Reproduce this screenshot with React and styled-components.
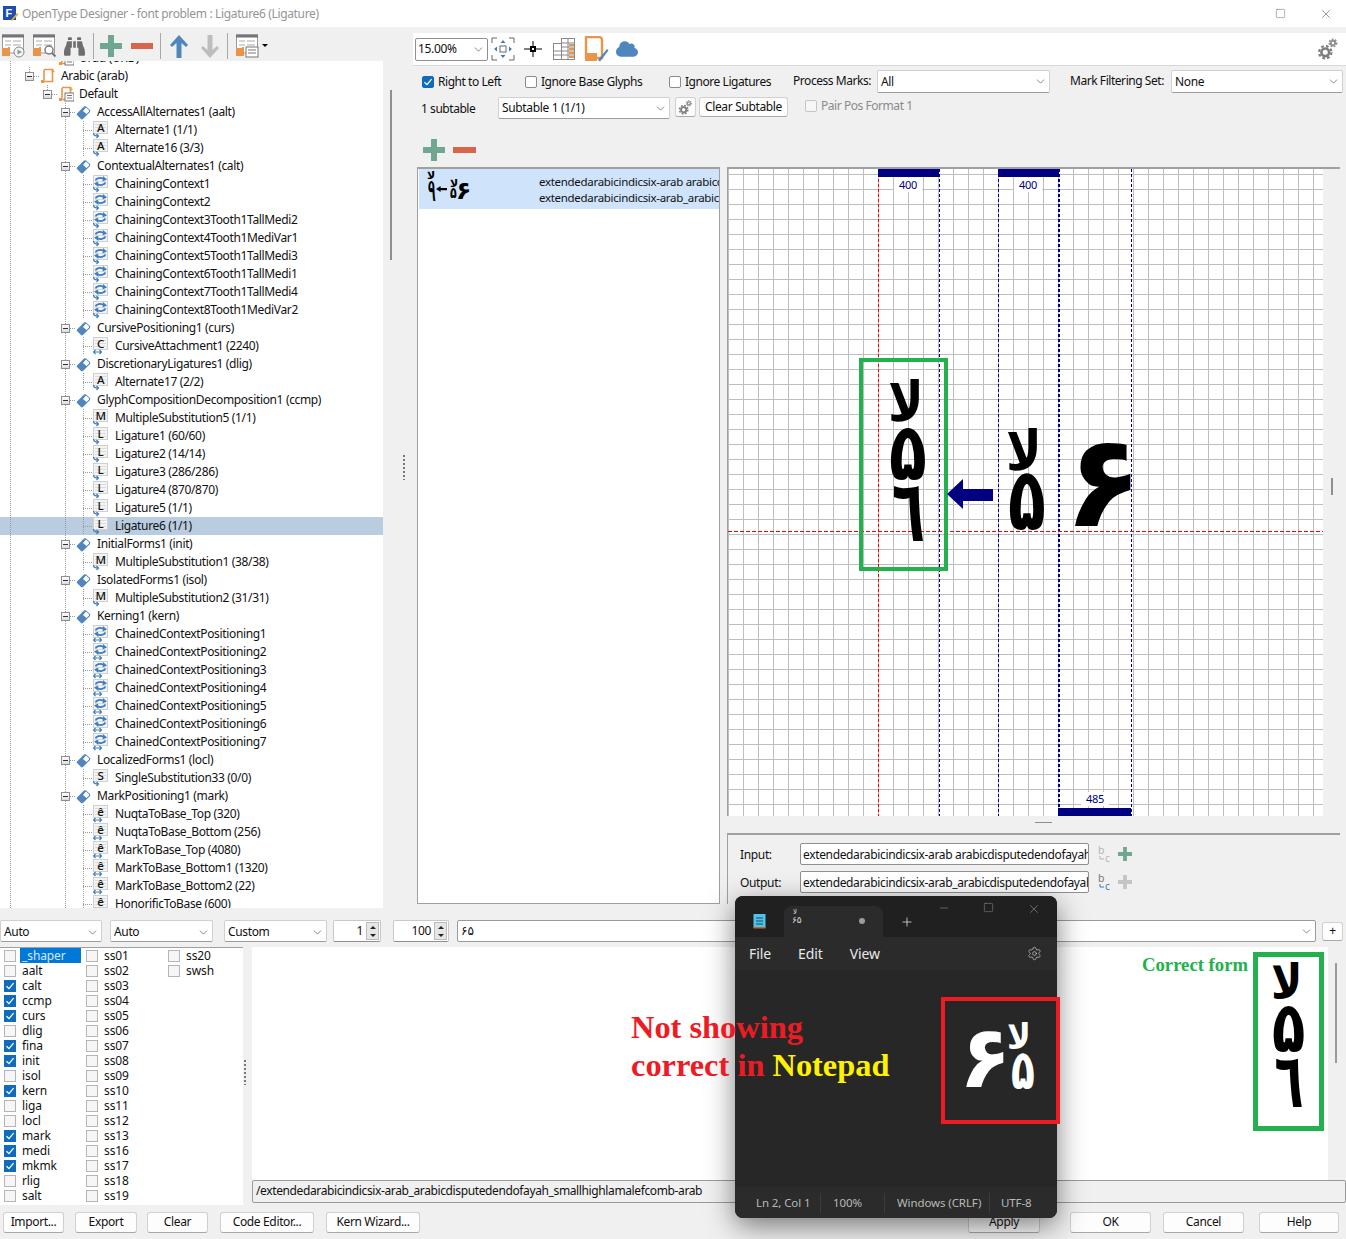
import React from "react";
import styled, { createGlobalStyle } from "styled-components";
import { FaBinoculars, FaCloud } from "react-icons/fa";
import { Settings, Plus, Minus, Square, X, ChevronDown } from "lucide-react";

const UI = `"Noto Sans", "Open Sans", sans-serif`;
const ARABIC = `"DejaVu Sans", sans-serif`;
const SERIF = `"Liberation Serif", serif`;

const Global = createGlobalStyle`
  html, body { margin: 0; background: #f0f0f0; }
  body { font: 12px/16px ${UI}; letter-spacing: -0.35px; color: #111; }
  * { box-sizing: border-box; }
`;

const Page = styled.div`
  position: relative;
  width: 1346px;
  height: 1239px;
  overflow: hidden;
  background: #f0f0f0;
`;

const Gap = styled.span`
  width: ${(p) => p.$w}px;
  flex: none;
`;

const TitleBar = styled.div`
  height: 27px;
  background: #fff;
  display: flex;
  align-items: center;
  color: #959595;
  font-size: 12px;
  padding-left: 2px;
  gap: 3px;
`;
const WinControls = styled.div`
  margin-left: auto;
  display: flex;
  align-items: center;
  gap: 33px;
  padding-right: 13px;
  color: #555;
`;

const Upper = styled.div`
  display: flex;
  height: 881px;
`;
const LeftPane = styled.div`
  width: 395px;
  display: flex;
  flex-direction: column;
`;
const LeftToolbar = styled.div`
  height: 34px;
  padding: 4px 0 0 1px;
  display: flex;
  align-items: center;
`;
const ToolSep = styled.span`
  width: 1px;
  height: 26px;
  background: #a8a8a8;
  margin: 0 ${(p) => p.$right ?? 6}px 0 ${(p) => p.$left ?? 7}px;
`;
const TreeArea = styled.div`
  flex: 1;
  display: flex;
  min-height: 0;
`;
const Tree = styled.div`
  width: 383px;
  background: #fff;
  overflow: hidden;
`;
const TreeInner = styled.div`
  margin-top: -12px;
`;
const TreeThumb = styled.div`
  width: 2px;
  height: 170px;
  background: #8f8f8f;
  margin: 29px 0 0 7px;
`;

const dotted = (x) => `linear-gradient(#9a9a9a 50%, transparent 50%) ${x}px 0 / 1px 2px repeat-y`;

const TreeRow = styled.div`
  height: 18px;
  position: relative;
  display: flex;
  align-items: center;
  white-space: nowrap;
  padding-left: ${(p) => p.$pad}px;
  background: ${(p) => (p.$selected ? "#b9cce0" : "transparent")};
  &::before {
    content: "";
    position: absolute;
    inset: 0;
    background: ${(p) => p.$guides.map((x) => dotted(x)).join(", ")};
    pointer-events: none;
  }
  &::after {
    content: "";
    position: absolute;
    left: ${(p) => p.$stub ?? 0}px;
    top: 0;
    width: 1px;
    height: 9px;
    display: ${(p) => (p.$stub ? "block" : "none")};
    background: linear-gradient(#9a9a9a 50%, transparent 50%) 0 0 / 1px 2px;
  }
`;
const Expander = styled.span`
  position: relative;
  z-index: 1;
  width: 9px;
  height: 9px;
  border: 1px solid #8f8f8f;
  background: linear-gradient(#fff, #dcdcdc);
  flex: none;
  &::after {
    content: "";
    position: absolute;
    left: 1px;
    top: 3px;
    width: 5px;
    height: 1px;
    background: #333;
  }
`;
const Dots = styled.span`
  width: ${(p) => p.$w}px;
  height: 1px;
  flex: none;
  background: linear-gradient(to right, #9a9a9a 50%, transparent 50%) 0 0 / 2px 1px;
`;
const RowLabel = styled.span`
  margin-left: ${(p) => p.$ml ?? 7}px;
  position: relative;
  z-index: 1;
`;

const Splitter = styled.div`
  width: 18px;
  display: flex;
  align-items: center;
  justify-content: center;
`;
const Grip = styled.span`
  display: block;
  width: 2px;
  height: 25px;
  background: linear-gradient(#777 50%, transparent 50%) 0 0 / 2px 4px;
`;

const RightPane = styled.div`
  flex: 1;
  display: flex;
  flex-direction: column;
  padding-top: 6px;
  min-width: 0;
`;
const TopBar = styled.div`
  height: 33px;
  background: #fff;
  border-bottom: 1px solid #d8d8d8;
  display: flex;
  align-items: center;
  padding: 0 7px 0 2px;
`;
const TopGear = styled.span`
  margin-left: auto;
  display: flex;
`;
const OptRow = styled.div`
  display: flex;
  align-items: center;
  height: ${(p) => p.$h}px;
  margin-top: 4px;
  padding-left: ${(p) => p.$pad}px;
`;
const Check = styled.span`
  display: flex;
  align-items: center;
  gap: 4px;
  width: ${(p) => p.$w}px;
  margin: ${(p) => p.$mt ?? 0}px 0 0 ${(p) => p.$ml ?? 0}px;
  flex: none;
  letter-spacing: -0.45px;
  color: ${(p) => (p.$off ? "#8b8b8b" : "#111")};
`;
const Box = styled.span`
  width: 12px;
  height: 12px;
  flex: none;
  border-radius: ${(p) => (p.$round ? 2 : 0)}px;
  border: 1px solid ${(p) => (p.$on ? "#0f6cbd" : p.$off ? "#c4c4c4" : p.$soft ? "#b5b5b5" : "#8a8a8a")};
  background: ${(p) => (p.$on ? "#0f6cbd" : p.$grey ? "#f6f6f6" : "#fff")};
  display: flex;
  align-items: center;
  justify-content: center;
`;
const Label = styled.span`
  width: ${(p) => p.$w}px;
  margin: ${(p) => p.$mt ?? 0}px 0 0 ${(p) => p.$ml ?? 0}px;
  flex: none;
  white-space: nowrap;
  letter-spacing: -0.45px;
`;
const SelectBox = styled.div`
  width: ${(p) => p.$w}px;
  height: ${(p) => p.$h ?? 23}px;
  margin-left: ${(p) => p.$ml ?? 0}px;
  flex: none;
  display: flex;
  align-items: center;
  justify-content: space-between;
  padding: ${(p) => p.$pt ?? 0}px 2px 0 ${(p) => p.$pl ?? 3}px;
  background: #fff;
  border: 1px solid ${(p) => p.$line ?? "#d0d0d0"};
  border-bottom-color: ${(p) => p.$line ?? "#9c9c9c"};
  border-radius: 2px;
`;
const SampleText = styled.span`
  font-family: ${ARABIC};
  font-size: 12px;
  letter-spacing: 0;
`;
const FlatBtn = styled.button`
  font: inherit;
  letter-spacing: inherit;
  color: #111;
  width: ${(p) => p.$w}px;
  height: ${(p) => p.$h ?? 21}px;
  margin: ${(p) => p.$mt ?? 0}px 0 0 ${(p) => p.$ml ?? 0}px;
  flex: none;
  padding: 0;
  display: inline-flex;
  align-items: center;
  justify-content: center;
  background: #fdfdfd;
  border: 1px solid #d0d0d0;
  border-bottom-color: #a8a8a8;
  border-radius: 3px;
`;
const AddRow = styled.div`
  height: 22px;
  margin-top: 20px;
  padding-left: 10px;
  display: flex;
  align-items: center;
  gap: 8px;
`;
const Work = styled.div`
  margin-top: 6px;
  height: 737px;
  padding-left: 4px;
  display: flex;
  gap: 7px;
`;
const ListPane = styled.div`
  width: 303px;
  background: #fff;
  border: 1px solid #a0a0a0;
  border-top-width: 2px;
  padding: 0 0 0 1px;
`;
const ListItem = styled.div`
  height: 40px;
  background: #cfe3fb;
  display: flex;
  overflow: hidden;
  position: relative;
`;
const ListText = styled.div`
  margin-left: 120px;
  padding-top: 5px;
  font-size: 11.5px;
  line-height: 16px;
  white-space: nowrap;
  overflow: hidden;
  letter-spacing: -0.3px;
`;
const MiniArrow = styled.svg`
  position: absolute;
  left: 17px;
  top: 17px;
`;
const RightCol = styled.div`
  width: 613px;
  display: flex;
  flex-direction: column;
`;
const CanvasFrame = styled.div`
  height: 649px;
  display: flex;
  border-top: 2px solid #a0a0a0;
  border-left: 1px solid #a0a0a0;
`;
const Grid = styled.div`
  position: relative;
  width: 595px;
  overflow: hidden;
  background-color: #fff;
  background-image: linear-gradient(to right, #bdbdbd 1px, transparent 1px),
    linear-gradient(#bdbdbd 1px, transparent 1px);
  background-size: 15px 15px;
  background-position: 0 5px;
  &::after {
    content: "";
    position: absolute;
    top: 0;
    bottom: 0;
    right: 0;
    width: 9px;
    background: linear-gradient(#bdbdbd 1px, transparent 1px) 0 5px / 15px 15px, #fff;
  }
`;
const Gutter = styled.div`
  flex: 1;
  display: flex;
  justify-content: center;
  padding-top: 309px;
`;
const GutterThumb = styled.span`
  width: 2px;
  height: 17px;
  background: #8f8f8f;
`;
const VGuide = styled.span`
  position: absolute;
  top: 0;
  bottom: 0;
  left: ${(p) => p.$x}px;
  z-index: 1;
  width: ${(p) => p.$w ?? 1}px;
  background: repeating-linear-gradient(${(p) => p.$c} 0 3px, transparent 3px 5px);
`;
const Baseline = styled.span`
  position: absolute;
  left: 0;
  right: 0;
  top: 362px;
  height: 1px;
  z-index: 1;
  background: repeating-linear-gradient(to right, #f00 0 4px, transparent 4px 6px);
`;
const WidthBar = styled.span`
  position: absolute;
  z-index: 2;
  left: ${(p) => p.$x}px;
  width: ${(p) => p.$w}px;
  ${(p) => (p.$bottom ? "top: 639px;" : "top: 0;")}
  height: 8px;
  background: #000080;
`;
const WidthLabel = styled.span`
  position: absolute;
  z-index: 2;
  left: ${(p) => p.$x}px;
  top: ${(p) => p.$y}px;
  width: 28px;
  text-align: center;
  font-size: 11px;
  line-height: 14px;
  color: #000080;
  background: #fff;
`;
const GreenFrame = styled.span`
  position: absolute;
  z-index: 3;
  left: ${(p) => p.$x}px;
  top: ${(p) => p.$y}px;
  width: ${(p) => p.$w}px;
  height: ${(p) => p.$h}px;
  border: ${(p) => p.$b}px solid #22b14c;
`;
const ArrowMark = styled.svg`
  position: absolute;
  z-index: 3;
  left: 219px;
  top: 310px;
`;
const Glyph = styled.span`
  position: absolute;
  z-index: ${(p) => p.$z ?? 3};
  left: ${(p) => p.$x}px;
  top: ${(p) => p.$y}px;
  font-family: ${ARABIC};
  font-weight: ${(p) => p.$weight ?? 700};
  font-size: ${(p) => p.$s}px;
  line-height: 1;
  letter-spacing: 0;
  color: ${(p) => p.$c ?? "#000"};
  white-space: nowrap;
  transform-origin: 0 0;
  transform: scaleY(${(p) => p.$sy ?? 1});
`;
const DashRow = styled.div`
  height: 17px;
  display: flex;
  justify-content: flex-end;
  padding: 6px 288px 0 0;
`;
const Dash = styled.span`
  width: 17px;
  height: 1px;
  background: #8f8f8f;
`;
const IOPanel = styled.div`
  flex: 1;
  border-top: 2px solid #a0a0a0;
  border-left: 1px solid #a0a0a0;
  padding: 8px 0 0 12px;
  display: flex;
  flex-direction: column;
  gap: 6px;
`;
const IORow = styled.div`
  display: flex;
  align-items: center;
  height: 22px;
`;
const IOLabel = styled.span`
  width: 60px;
  padding-top: 2px;
`;
const TextField = styled.div`
  width: ${(p) => p.$w}px;
  height: 22px;
  flex: none;
  background: #fff;
  border: 1px solid #8f8f8f;
  border-radius: 2px;
  padding: 3px 0 0 2px;
  white-space: nowrap;
  overflow: hidden;
`;
const IOIcon = styled.span`
  display: flex;
  margin-left: ${(p) => p.$ml}px;
`;

const ControlRow = styled.div`
  margin-top: 12px;
  height: 22px;
  display: flex;
  align-items: center;
`;
const Spin = styled.div`
  width: ${(p) => p.$w}px;
  height: 22px;
  margin-left: ${(p) => p.$ml}px;
  flex: none;
  background: #fff;
  border: 1px solid #c8c8c8;
  border-bottom-color: #8f8f8f;
  border-radius: 2px;
  display: flex;
  align-items: center;
  justify-content: flex-end;
  gap: 3px;
`;
const SpinBtns = styled.span`
  width: 13px;
  height: 18px;
  display: flex;
  flex-direction: column;
  background: #e6e6e6;
  border: 1px solid #bbb;
  margin-right: 1px;
`;
const SpinArrow = styled.span`
  flex: 1;
  display: flex;
  align-items: center;
  justify-content: center;
  &::after {
    content: "";
    border-left: 3px solid transparent;
    border-right: 3px solid transparent;
    ${(p) => (p.$down ? "border-top: 3px solid #222;" : "border-bottom: 3px solid #222;")}
  }
`;
const Lower = styled.div`
  margin-top: 5px;
  height: 258px;
  display: flex;
`;
const Checks = styled.div`
  width: 243px;
  background: #fff;
  border-top: 1px solid #a0a0a0;
  padding: 0 0 0 4px;
  display: grid;
  grid-template-rows: repeat(17, 15px);
  grid-template-columns: 82px 82px 70px;
  grid-auto-flow: column;
`;
const Feature = styled.div`
  display: flex;
  align-items: center;
  font-size: 12px;
  letter-spacing: -0.1px;
`;
const FeatureName = styled.span`
  margin-left: ${(p) => (p.$sel ? 4 : 6)}px;
  padding-left: ${(p) => (p.$sel ? 2 : 0)}px;
  width: ${(p) => (p.$sel ? "61px" : "auto")};
  height: 15px;
  line-height: 15px;
  color: ${(p) => (p.$sel ? "#d5e8fa" : "#111")};
  background: ${(p) => (p.$sel ? "#0078d7" : "transparent")};
`;
const LowerGrip = styled.div`
  width: 9px;
  display: flex;
  padding: 113px 0 0 1px;
`;
const PreviewCol = styled.div`
  flex: 1;
  display: flex;
  flex-direction: column;
`;
const PreviewRow = styled.div`
  height: 233px;
  display: flex;
`;
const Preview = styled.div`
  width: 1076px;
  background: #fff;
`;
const PreviewThumb = styled.span`
  width: 2px;
  height: 100px;
  margin: 16px 0 0 7px;
  background: #9a9a9a;
`;
const PathField = styled.div`
  height: 23px;
  border: 1px solid #9a9a9a;
  border-radius: 2px;
  padding: 2px 0 0 3px;
  white-space: nowrap;
  overflow: hidden;
  letter-spacing: -0.38px;
`;
const Footer = styled.div`
  margin-top: 6px;
  height: 22px;
  display: flex;
  align-items: center;
`;

const Notepad = styled.div`
  position: absolute;
  z-index: 10;
  left: 735px;
  top: 896px;
  width: 322px;
  height: 322px;
  background: #272727;
  border-radius: 8px;
  box-shadow: 0 8px 28px rgba(0, 0, 0, 0.5);
  display: flex;
  flex-direction: column;
  color: #e8e8e8;
  overflow: hidden;
`;
const NpHead = styled.div`
  height: 41px;
  background: #202020;
  display: flex;
  align-items: flex-end;
  padding-left: 18px;
  position: relative;
`;
const NpTab = styled.div`
  width: 99px;
  height: 31px;
  margin-left: 18px;
  background: #2b2b2b;
  border-radius: 8px 8px 0 0;
  position: relative;
`;
const NpDot = styled.span`
  position: absolute;
  right: 18px;
  top: 12px;
  width: 6px;
  height: 6px;
  border-radius: 50%;
  background: #9c9c9c;
`;
const NpIcon = styled.svg`
  margin-bottom: 8px;
`;
const NpPlus = styled.span`
  display: flex;
  margin: 0 0 8px 17px;
  color: #e8e8e8;
`;
const NpWin = styled.div`
  position: absolute;
  right: 16px;
  top: 6px;
  display: flex;
  gap: 33px;
  color: #a0a0a0;
`;
const NpMenu = styled.div`
  height: 33px;
  background: #2b2b2b;
  display: flex;
  align-items: center;
  padding: 0 15px 0 14px;
  gap: 27px;
  font-size: 14px;
  letter-spacing: -0.1px;
`;
const NpBody = styled.div`
  flex: 1;
`;
const NpStatus = styled.div`
  height: 31px;
  background: #2b2b2b;
  display: flex;
  align-items: center;
  padding-left: 21px;
  color: #b9b9b9;
  font-size: 11.5px;
  letter-spacing: -0.1px;
`;
const NpCell = styled.span`
  width: ${(p) => p.$w}px;
  padding-left: ${(p) => p.$pl ?? 12}px;
  height: 20px;
  line-height: 20px;
  flex: none;
  white-space: nowrap;
  border-right: 1px solid ${(p) => (p.$end ? "transparent" : "#3c3c3c")};
`;
const NpEnd = styled.span`
  margin-left: auto;
  display: flex;
`;
const NoteBlock = styled.div`
  position: absolute;
  z-index: 12;
  left: 631px;
  top: 1008px;
  font: bold 32.4px/38px ${SERIF};
  letter-spacing: 0;
  color: #ed1c24;
  white-space: nowrap;
`;
const Yellow = styled.span`
  color: #fff200;
`;
const CorrectNote = styled.div`
  position: absolute;
  z-index: 12;
  left: 1142px;
  top: 953px;
  font: bold 18.7px/24px ${SERIF};
  letter-spacing: 0;
  color: #22b14c;
`;
const RedFrame = styled.span`
  position: absolute;
  z-index: 12;
  left: 941px;
  top: 997px;
  width: 119px;
  height: 127px;
  border: 4px solid #ed1c24;
`;
const ArrowSvg = styled.svg`
  transform: ${(p) => (p.$down ? "rotate(180deg)" : "none")};
`;
const Caret = styled.svg`
  margin-left: 3px;
`;

/* ---- icons ---- */
const AppLogo = () => (
  <svg width="17" height="17" viewBox="0 0 17 17">
    <rect x="1" y="1" width="13" height="14" fill="#1c4fb0" />
    <text x="3.5" y="12" fontSize="11" fontWeight="700" fill="#fff" fontFamily="Liberation Sans">F</text>
    <path d="M9 15 15 8l1.500 1.500L10 16z" fill="#e8b020" />
  </svg>
);

const WindowDoc = ({ children }) => (
  <svg width="24" height="24" viewBox="0 0 24 24">
    <rect x="1.500" y="1" width="21" height="18" fill="#fff" stroke="#999" />
    <rect x="1" y="0.500" width="22" height="3" fill="#757575" />
    <path d="M4 7h6M12 7h8M4 11h6M12 11h8" stroke="#aaa" />
    <path d="M1 14h6v-1h2v9H1z" fill="#e8954a" />
    {children}
  </svg>
);

const PlusMark = ({ c = "#6fa790", size = 22 }) => (
  <svg width={size} height={size} viewBox="0 0 22 22">
    <path d="M8 0h6v8h8v6h-8v8H8v-8H0V8h8z" fill={c} />
  </svg>
);
const MinusMark = ({ w = 22, h = 6 }) => (
  <svg width={w} height={h}>
    <rect width={w} height={h} fill="#d8654a" />
  </svg>
);
const BigArrow = ({ c, down }) => (
  <ArrowSvg $down={down} width="18" height="23" viewBox="0 0 18 23">
    <path d="M9 0 18 10 16 12 11.500 8V23H6.500V8L2 12 0 10z" fill={c} />
  </ArrowSvg>
);
const Gears = ({ size = 20 }) => (
  <svg width={size} height={size} viewBox="0 0 20 20">
    <circle cx="7.500" cy="13" r="3.500" fill="none" stroke="#7d7d7d" strokeWidth="2.400" />
    <circle cx="7.500" cy="13" r="5.600" fill="none" stroke="#7d7d7d" strokeWidth="2" strokeDasharray="2.400 2" />
    <circle cx="14.500" cy="4.500" r="2" fill="none" stroke="#8f8f8f" strokeWidth="1.800" />
    <circle cx="14.500" cy="4.500" r="3.400" fill="none" stroke="#8f8f8f" strokeWidth="1.400" strokeDasharray="1.600 1.300" />
  </svg>
);
const Tick = () => (
  <svg width="10" height="10" viewBox="0 0 10 10">
    <path d="M1.500 5.200 4 7.600 8.600 2.200" fill="none" stroke="#fff" strokeWidth="1.300" />
  </svg>
);
const Chevron = () => <ChevronDown size={13} color="#555" strokeWidth={1.3} />;

const ScriptIcon = ({ lang }) => (
  <svg width="16" height="16" viewBox="0 0 16 16">
    <path d="M4 1.500h8.500v12H3" fill="#fff" stroke="#e8954a" strokeWidth="1.600" />
    <path d="M4 2v10.500" stroke="#e8954a" strokeWidth="1.600" />
    <path d="M1 12h3v3H1z" fill="#e8954a" />
    <path d="M12.500 1v2.500h2" fill="none" stroke="#e8954a" strokeWidth="1.500" />
    {lang && (
      <>
        <rect x="7" y="7" width="9" height="8" fill="#fff" stroke="#777" />
        <path d="M9 9.500h5M9 12h5" stroke="#777" />
      </>
    )}
  </svg>
);
const FeatureIcon = () => (
  <svg width="15" height="15" viewBox="0 0 15 15">
    <path d="M1 8.500 8 1.500Q9 .8 10 1.500L14 5Q14.600 6 14 7L7 14Q6 14.600 5 14L1 10Q.4 9.200 1 8.500z" fill="#4f86bd" />
    <path d="M7 6 9.500 3Q10 2.500 10.500 3L13 5.300Q13.300 6 13 6.500L10.500 9z" fill="#fff" />
  </svg>
);
const LookupIcon = ({ kind }) => {
  const pos = kind === "ê" || kind === "chainedPos" || kind === "C";
  const chain = kind === "chain" || kind === "chainedPos";
  return (
    <svg width="15" height="18" viewBox="0 0 15 18">
      <rect x="0.500" y="0.500" width="14" height="12" fill="#f4f4f4" stroke="#cfcfcf" />
      <path d="M2 3.500h11M2 6.500h11M2 9.500h11" stroke="#dcdcdc" />
      {chain ? (
        <>
          <path d="M2.500 5.500C3.500 3 7 2.200 10.500 3.800" fill="none" stroke="#3f7fc0" strokeWidth="1.800" />
          <path d="M10 1 14 4.500 9.500 6.500z" fill="#3f7fc0" />
          <path d="M12.500 7.500C11 10 7.500 10.800 4.500 9.200" fill="none" stroke="#3f7fc0" strokeWidth="1.800" />
          <path d="M5 6.500 1 8.500 5.500 12z" fill="#3f7fc0" />
        </>
      ) : (
        <text x="7.500" y="10.500" textAnchor="middle" fontSize="11.500" fontWeight="500" fontFamily="Noto Sans" fill="#111">{kind}</text>
      )}
      {pos ? (
        <path d="M0.500 15h8M2.500 13l-2 2 2 2M6.500 13l2 2-2 2" fill="none" stroke="#3f7fc0" strokeWidth="1.200" />
      ) : (
        <path d="M0.500 12c0 2 1.500 3 4.500 3M3.500 13l2 2-2 2" fill="none" stroke="#3f7fc0" strokeWidth="1.200" />
      )}
    </svg>
  );
};
const SplitIcon = ({ off }) => (
  <svg width="13" height="17" viewBox="0 0 13 17">
    <text x="0" y="8" fontSize="10.500" fontFamily="Noto Sans" fill={off ? "#b5b5b5" : "#777"}>b</text>
    <path d="M2 10v3h4" fill="none" stroke={off ? "#b5b5b5" : "#3a78bc"} />
    <text x="7" y="15.500" fontSize="10" fontFamily="Noto Sans" fill={off ? "#b5b5b5" : "#3a78bc"}>c</text>
  </svg>
);

const FitIcon = () => (
  <svg width="24" height="24" viewBox="0 0 24 24">
    <path d="M1 6V1h5M18 1h5v5M23 18v5h-5M6 23H1v-5" fill="none" stroke="#666" />
    <rect x="9" y="9" width="6" height="6" fill="none" stroke="#666" />
    <path d="M12 3l2.500 3h-5zM12 21l2.500-3h-5zM3 12l3-2.500v5zM21 12l-3-2.500v5z" fill="#3f7fc0" />
  </svg>
);
const CrossIcon = () => (
  <svg width="18" height="18" viewBox="0 0 18 18">
    <path d="M0 9h18M9 1v16" stroke="#000" />
    <rect x="6" y="6" width="6" height="6" fill="#000" />
    <rect x="8" y="8" width="2" height="2" fill="#fff" />
  </svg>
);
const TableIcon = () => (
  <svg width="22" height="22" viewBox="0 0 22 22">
    <rect x="8.500" y="0.500" width="13" height="21" fill="#fff" stroke="#888" />
    <rect x="0.500" y="5.500" width="8" height="16" fill="#fff" stroke="#888" />
    <path d="M8 5h14M8 9h14M1 13h21M1 17h21M15 1v20" stroke="#888" />
    <path d="M16 6h5v2h-5zM16 10h5v2h-5zM16 14h5v2h-5zM16 18h5v2h-5z" fill="#e8954a" />
  </svg>
);
const OrangeDoc = () => (
  <svg width="25" height="26" viewBox="0 0 25 26">
    <path d="M2 1h13a3 3 0 0 1 3 3v18H2z" fill="#fff" stroke="#e8954a" strokeWidth="2.400" />
    <path d="M1 17h12v8H1z" fill="#e8954a" />
    <path d="M14 24 23 13l1.500 1.500L16 25.500z" fill="#4f86bd" />
  </svg>
);

/* ---- data ---- */
const group = (name, kind, items) => [
  { type: "feature", label: name },
  ...items.map((label) => ({ type: "lookup", label, kind })),
];
const range = (prefix, n) => Array.from({ length: n }, (_, i) => `${prefix}${i + 1}`);

const treeRows = [
  { type: "lang", label: "Urdu (URD)" },
  { type: "script", label: "Arabic (arab)" },
  { type: "lang", label: "Default", stub: true },
  ...group("AccessAllAlternates1 (aalt)", "A", ["Alternate1 (1/1)", "Alternate16 (3/3)"]),
  ...group("ContextualAlternates1 (calt)", "chain", [
    "ChainingContext1",
    "ChainingContext2",
    "ChainingContext3Tooth1TallMedi2",
    "ChainingContext4Tooth1MediVar1",
    "ChainingContext5Tooth1TallMedi3",
    "ChainingContext6Tooth1TallMedi1",
    "ChainingContext7Tooth1TallMedi4",
    "ChainingContext8Tooth1MediVar2",
  ]),
  ...group("CursivePositioning1 (curs)", "C", ["CursiveAttachment1 (2240)"]),
  ...group("DiscretionaryLigatures1 (dlig)", "A", ["Alternate17 (2/2)"]),
  { type: "feature", label: "GlyphCompositionDecomposition1 (ccmp)" },
  { type: "lookup", kind: "M", label: "MultipleSubstitution5 (1/1)" },
  { type: "lookup", kind: "L", label: "Ligature1 (60/60)" },
  { type: "lookup", kind: "L", label: "Ligature2 (14/14)" },
  { type: "lookup", kind: "L", label: "Ligature3 (286/286)" },
  { type: "lookup", kind: "L", label: "Ligature4 (870/870)" },
  { type: "lookup", kind: "L", label: "Ligature5 (1/1)" },
  { type: "lookup", kind: "L", label: "Ligature6 (1/1)", selected: true },
  ...group("InitialForms1 (init)", "M", ["MultipleSubstitution1 (38/38)"]),
  ...group("IsolatedForms1 (isol)", "M", ["MultipleSubstitution2 (31/31)"]),
  ...group("Kerning1 (kern)", "chainedPos", range("ChainedContextPositioning", 7)),
  ...group("LocalizedForms1 (locl)", "S", ["SingleSubstitution33 (0/0)"]),
  { type: "feature", label: "MarkPositioning1 (mark)" },
  ...[
    "NuqtaToBase_Top (320)",
    "NuqtaToBase_Bottom (256)",
    "MarkToBase_Top (4080)",
    "MarkToBase_Bottom1 (1320)",
    "MarkToBase_Bottom2 (22)",
    "HonorificToBase (600)",
  ].map((label) => ({ type: "lookup", kind: "ê", label })),
];

const on = new Set(["calt", "ccmp", "curs", "fina", "init", "kern", "mark", "medi", "mkmk"]);
const features = [
  "_shaper", "aalt", "calt", "ccmp", "curs", "dlig", "fina", "init", "isol", "kern", "liga", "locl",
  "mark", "medi", "mkmk", "rlig", "salt",
  "ss01", "ss02", "ss03", "ss04", "ss05", "ss06", "ss07", "ss08", "ss09", "ss10", "ss11", "ss12", "ss13",
  "ss16", "ss17", "ss18", "ss19", "ss20", "swsh",
];

const TreeLine = ({ row }) => {
  if (row.type === "script")
    return (
      <TreeRow $pad={25} $guides={[10]} $stub={29}>
        <Expander /><Dots $w={6} /><ScriptIcon /><RowLabel $ml={5}>{row.label}</RowLabel>
      </TreeRow>
    );
  if (row.type === "lang")
    return (
      <TreeRow $pad={row.stub ? 43 : 58} $guides={[10]} $stub={row.stub ? 47 : undefined}>
        {row.stub && (<><Expander /><Dots $w={6} /></>)}
        <ScriptIcon lang /><RowLabel $ml={5}>{row.label}</RowLabel>
      </TreeRow>
    );
  if (row.type === "feature")
    return (
      <TreeRow $pad={61} $guides={[10, 65]}>
        <Expander /><Dots $w={6} /><FeatureIcon /><RowLabel $ml={6}>{row.label}</RowLabel>
      </TreeRow>
    );
  return (
    <TreeRow $pad={83} $guides={[10, 65, 83]} $selected={row.selected}>
      <Dots $w={10} /><LookupIcon kind={row.kind} /><RowLabel>{row.label}</RowLabel>
    </TreeRow>
  );
};

const GlyphStack = ({ x, y, k = 1, z }) => (
  <>
    <Glyph $x={x} $y={y} $s={48 * k} $sy={1.15} $z={z}>لا</Glyph>
    <Glyph $x={x + 1 * k} $y={y + 38 * k} $s={62 * k} $sy={1.3} $z={z}>۵</Glyph>
    <Glyph $x={x + 4 * k} $y={y + 95 * k} $s={54 * k} $sy={1.6} $z={z}>٦</Glyph>
  </>
);

const App = () => (
  <Page>
    <Global />
    <TitleBar>
      <AppLogo />
      OpenType Designer - font problem : Ligature6 (Ligature)
      <WinControls>
        <Square size={11} strokeWidth={1} />
        <X size={14} strokeWidth={1} />
      </WinControls>
    </TitleBar>

    <Upper>
      <LeftPane>
        <LeftToolbar>
          <WindowDoc>
            <circle cx="18" cy="18" r="5" fill="#f4f4f4" stroke="#888" />
            <path d="M16.500 15.500 21 18l-4.500 2.500z" fill="#6fa790" />
          </WindowDoc>
          <Gap $w={7} />
          <WindowDoc>
            <circle cx="17" cy="16" r="4" fill="#fff" stroke="#777" strokeWidth="1.400" />
            <path d="M20 19l3.500 3.500" stroke="#777" strokeWidth="2" />
          </WindowDoc>
          <Gap $w={8} />
          <FaBinoculars size={21} color="#6e6e6e" />
          <ToolSep $left={8} />
          <PlusMark />
          <Gap $w={9} />
          <MinusMark />
          <ToolSep />
          <Gap $w={3} />
          <BigArrow c="#4f86bd" />
          <Gap $w={13} />
          <BigArrow c="#bdbdbd" down />
          <ToolSep $left={8} $right={7} />
          <WindowDoc>
            <rect x="11" y="13" width="12" height="10" fill="#fff" stroke="#777" />
            <path d="M13 16h8M13 19h8" stroke="#777" />
          </WindowDoc>
          <Caret width="6" height="4">
            <path d="M0 0h6L3 3z" fill="#000" />
          </Caret>
        </LeftToolbar>
        <TreeArea>
          <Tree>
            <TreeInner>
              {treeRows.map((row, i) => (
                <TreeLine row={row} key={i} />
              ))}
            </TreeInner>
          </Tree>
          <TreeThumb />
        </TreeArea>
      </LeftPane>
      <Splitter>
        <Grip />
      </Splitter>
      <RightPane>
        <TopBar>
          <SelectBox $w={73} $line="#8f8f8f" $pl={2}>15.00%<Chevron /></SelectBox>
          <Gap $w={3} />
          <FitIcon />
          <Gap $w={9} />
          <CrossIcon />
          <Gap $w={11} />
          <TableIcon />
          <Gap $w={9} />
          <OrangeDoc />
          <Gap $w={7} />
          <FaCloud size={22} color="#4f86bd" />
          <TopGear><Gears size={22} /></TopGear>
        </TopBar>
        <OptRow $h={23} $pad={9}>
          <Check $w={103}><Box $on $round><Tick /></Box>Right to Left</Check>
          <Check $w={144}><Box $round />Ignore Base Glyphs</Check>
          <Check $w={124}><Box $round />Ignore Ligatures</Check>
          <Label $w={84} $mt={-2}>Process Marks:</Label>
          <SelectBox $w={173}>All<Chevron /></SelectBox>
          <Label $w={101} $ml={20} $mt={-2}>Mark Filtering Set:</Label>
          <SelectBox $w={172}>None<Chevron /></SelectBox>
        </OptRow>
        <OptRow $h={22} $pad={8}>
          <Label $w={77} $mt={2}>1 subtable</Label>
          <SelectBox $w={172} $h={22}>Subtable 1 (1/1)<Chevron /></SelectBox>
          <FlatBtn $w={21} $ml={5} $h={20} $mt={-2}><Gears size={15} /></FlatBtn>
          <FlatBtn $w={89} $ml={3} $h={20} $mt={-2}>Clear Subtable</FlatBtn>
          <Check $w={120} $off $ml={17} $mt={-4}><Box $off $grey $round />Pair Pos Format 1</Check>
        </OptRow>
        <AddRow>
          <PlusMark />
          <MinusMark w={23} />
        </AddRow>
        <Work>
          <ListPane>
            <ListItem>
              <Glyph $x={8} $y={1} $s={11}>لا</Glyph>
              <Glyph $x={9} $y={9} $s={11} $sy={1.4}>۵</Glyph>
              <Glyph $x={10} $y={18} $s={11} $sy={1.6}>٦</Glyph>
              <MiniArrow width="11" height="6" viewBox="0 0 12 8" preserveAspectRatio="none">
                <path d="M0 4 5 0v2.500h7v3H5V8z" fill="#000" />
              </MiniArrow>
              <Glyph $x={31} $y={9} $s={11}>لا</Glyph>
              <Glyph $x={31} $y={16} $s={11} $sy={1.4}>۵</Glyph>
              <Glyph $x={37} $y={9} $s={25}>۶</Glyph>
              <ListText>
                extendedarabicindicsix-arab arabicdisputedendofayah_smallhigh
                <br />
                extendedarabicindicsix-arab_arabicdisputedendofayah_smallhigh
              </ListText>
            </ListItem>
          </ListPane>
          <RightCol>
            <CanvasFrame>
              <Grid>
                <VGuide $x={150} $c="#f00" />
                <VGuide $x={211} $c="#000080" />
                <VGuide $x={270} $c="#000080" />
                <VGuide $x={330} $w={2} $c="#000080" />
                <VGuide $x={403} $c="#000080" />
                <Baseline />
                <WidthBar $x={150} $w={61} />
                <WidthBar $x={270} $w={61} />
                <WidthBar $x={330} $w={73} $bottom />
                <WidthLabel $x={166} $y={9}>400</WidthLabel>
                <WidthLabel $x={286} $y={9}>400</WidthLabel>
                <WidthLabel $x={353} $y={623}>485</WidthLabel>
                <GreenFrame $x={131} $y={189} $w={89} $h={213} $b={4} />
                <GlyphStack x={160} y={205} />
                <ArrowMark width="46" height="30" viewBox="0 0 46 30">
                  <path d="M0 15 16 0v10h30v12H16v8z" fill="#000080" />
                </ArrowMark>
                <Glyph $x={278} $y={254} $s={48} $sy={1.15}>لا</Glyph>
                <Glyph $x={280} $y={288} $s={62} $sy={1.4}>۵</Glyph>
                <Glyph $x={336} $y={248} $s={129}>۶</Glyph>
              </Grid>
              <Gutter><GutterThumb /></Gutter>
            </CanvasFrame>
            <DashRow><Dash /></DashRow>
            <IOPanel>
              <IORow>
                <IOLabel>Input:</IOLabel>
                <TextField $w={289}>extendedarabicindicsix-arab arabicdisputedendofayah_small</TextField>
                <IOIcon $ml={9}><SplitIcon off /></IOIcon>
                <IOIcon $ml={7}><PlusMark size={14} /></IOIcon>
              </IORow>
              <IORow>
                <IOLabel>Output:</IOLabel>
                <TextField $w={289}>extendedarabicindicsix-arab_arabicdisputedendofayah_small</TextField>
                <IOIcon $ml={9}><SplitIcon /></IOIcon>
                <IOIcon $ml={7}><PlusMark size={14} c="#c4c4c4" /></IOIcon>
              </IORow>
            </IOPanel>
          </RightCol>
        </Work>
      </RightPane>
    </Upper>

    <ControlRow>
      <SelectBox $w={102} $h={22} $pl={3} $pt={2}>Auto<Chevron /></SelectBox>
      <SelectBox $w={103} $h={22} $ml={8} $pt={2}>Auto<Chevron /></SelectBox>
      <SelectBox $w={103} $h={22} $ml={11} $pt={2}>Custom<Chevron /></SelectBox>
      <Spin $w={48} $ml={6}>1<SpinBtns><SpinArrow /><SpinArrow $down /></SpinBtns></Spin>
      <Spin $w={56} $ml={12}>100<SpinBtns><SpinArrow /><SpinArrow $down /></SpinBtns></Spin>
      <SelectBox $w={859} $h={22} $ml={8} $line="#9a9a9a">
        <SampleText>۶۵</SampleText><Chevron />
      </SelectBox>
      <FlatBtn $w={21} $h={19} $ml={6}>+</FlatBtn>
    </ControlRow>

    <Lower>
      <Checks>
        {features.map((f, i) => (
          <Feature key={f}>
            <Box $on={on.has(f)} $grey={!on.has(f)} $soft={!on.has(f)}>
              {on.has(f) && <Tick />}
            </Box>
            <FeatureName $sel={i === 0}>{f}</FeatureName>
          </Feature>
        ))}
      </Checks>
      <LowerGrip><Grip /></LowerGrip>
      <PreviewCol>
        <PreviewRow>
          <Preview />
          <PreviewThumb />
        </PreviewRow>
        <PathField>/extendedarabicindicsix-arab_arabicdisputedendofayah_smallhighlamalefcomb-arab</PathField>
      </PreviewCol>
    </Lower>

    <Footer>
      <FlatBtn $w={61} $ml={3}>Import...</FlatBtn>
      <FlatBtn $w={62} $ml={11}>Export</FlatBtn>
      <FlatBtn $w={61} $ml={10}>Clear</FlatBtn>
      <FlatBtn $w={94} $ml={12}>Code Editor...</FlatBtn>
      <FlatBtn $w={94} $ml={12}>Kern Wizard...</FlatBtn>
      <FlatBtn $w={72} $ml={548}>Apply</FlatBtn>
      <FlatBtn $w={81} $ml={30}>OK</FlatBtn>
      <FlatBtn $w={81} $ml={12}>Cancel</FlatBtn>
      <FlatBtn $w={80} $ml={15}>Help</FlatBtn>
    </Footer>

    <Notepad>
      <NpHead>
        <NpIcon width="13" height="16" viewBox="0 0 13 16">
          <rect x="0.500" y="1" width="12" height="14" fill="#4fc3e8" />
          <path d="M3 5h7M3 8h7M3 11h7" stroke="#124a66" />
          <rect x="0.500" y="14" width="12" height="1.500" fill="#c8641e" />
        </NpIcon>
        <NpTab>
          <Glyph $x={9} $y={3} $s={7} $c="#ddd" $weight={400}>لا</Glyph>
          <Glyph $x={8} $y={10} $s={9} $c="#ddd" $weight={400}>۶۵</Glyph>
          <NpDot />
        </NpTab>
        <NpPlus><Plus size={14} strokeWidth={1.3} /></NpPlus>
        <NpWin>
          <Minus size={12} strokeWidth={1} />
          <Square size={11} strokeWidth={1} />
          <X size={14} strokeWidth={1} />
        </NpWin>
      </NpHead>
      <NpMenu>
        <span>File</span>
        <span>Edit</span>
        <span>View</span>
        <NpEnd><Settings size={15} strokeWidth={1.1} color="#ccc" /></NpEnd>
      </NpMenu>
      <NpBody />
      <NpStatus>
        <NpCell $w={65} $pl={0}>Ln 2, Col 1</NpCell>
        <NpCell $w={64}>100%</NpCell>
        <NpCell $w={105}>Windows (CRLF)</NpCell>
        <NpCell $w={50} $pl={11} $end>UTF-8</NpCell>
      </NpStatus>
    </Notepad>

    <Glyph $x={1007} $y={1019} $s={32} $sy={1.1} $c="#fff" $z={11}>لا</Glyph>
    <Glyph $x={1011} $y={1043} $s={39} $sy={1.4} $c="#fff" $z={11}>۵</Glyph>
    <Glyph $x={959} $y={1014} $s={86} $c="#fff" $z={11}>۶</Glyph>
    <RedFrame />
    <NoteBlock>
      Not showing
      <br />
      correct in <Yellow>Notepad</Yellow>
    </NoteBlock>
    <CorrectNote>Correct form</CorrectNote>
    <GreenFrame $x={1253} $y={952} $w={71} $h={179} $b={5} />
    <GlyphStack x={1271} y={959} k={0.88} z={6} />
  </Page>
);

export default App;
